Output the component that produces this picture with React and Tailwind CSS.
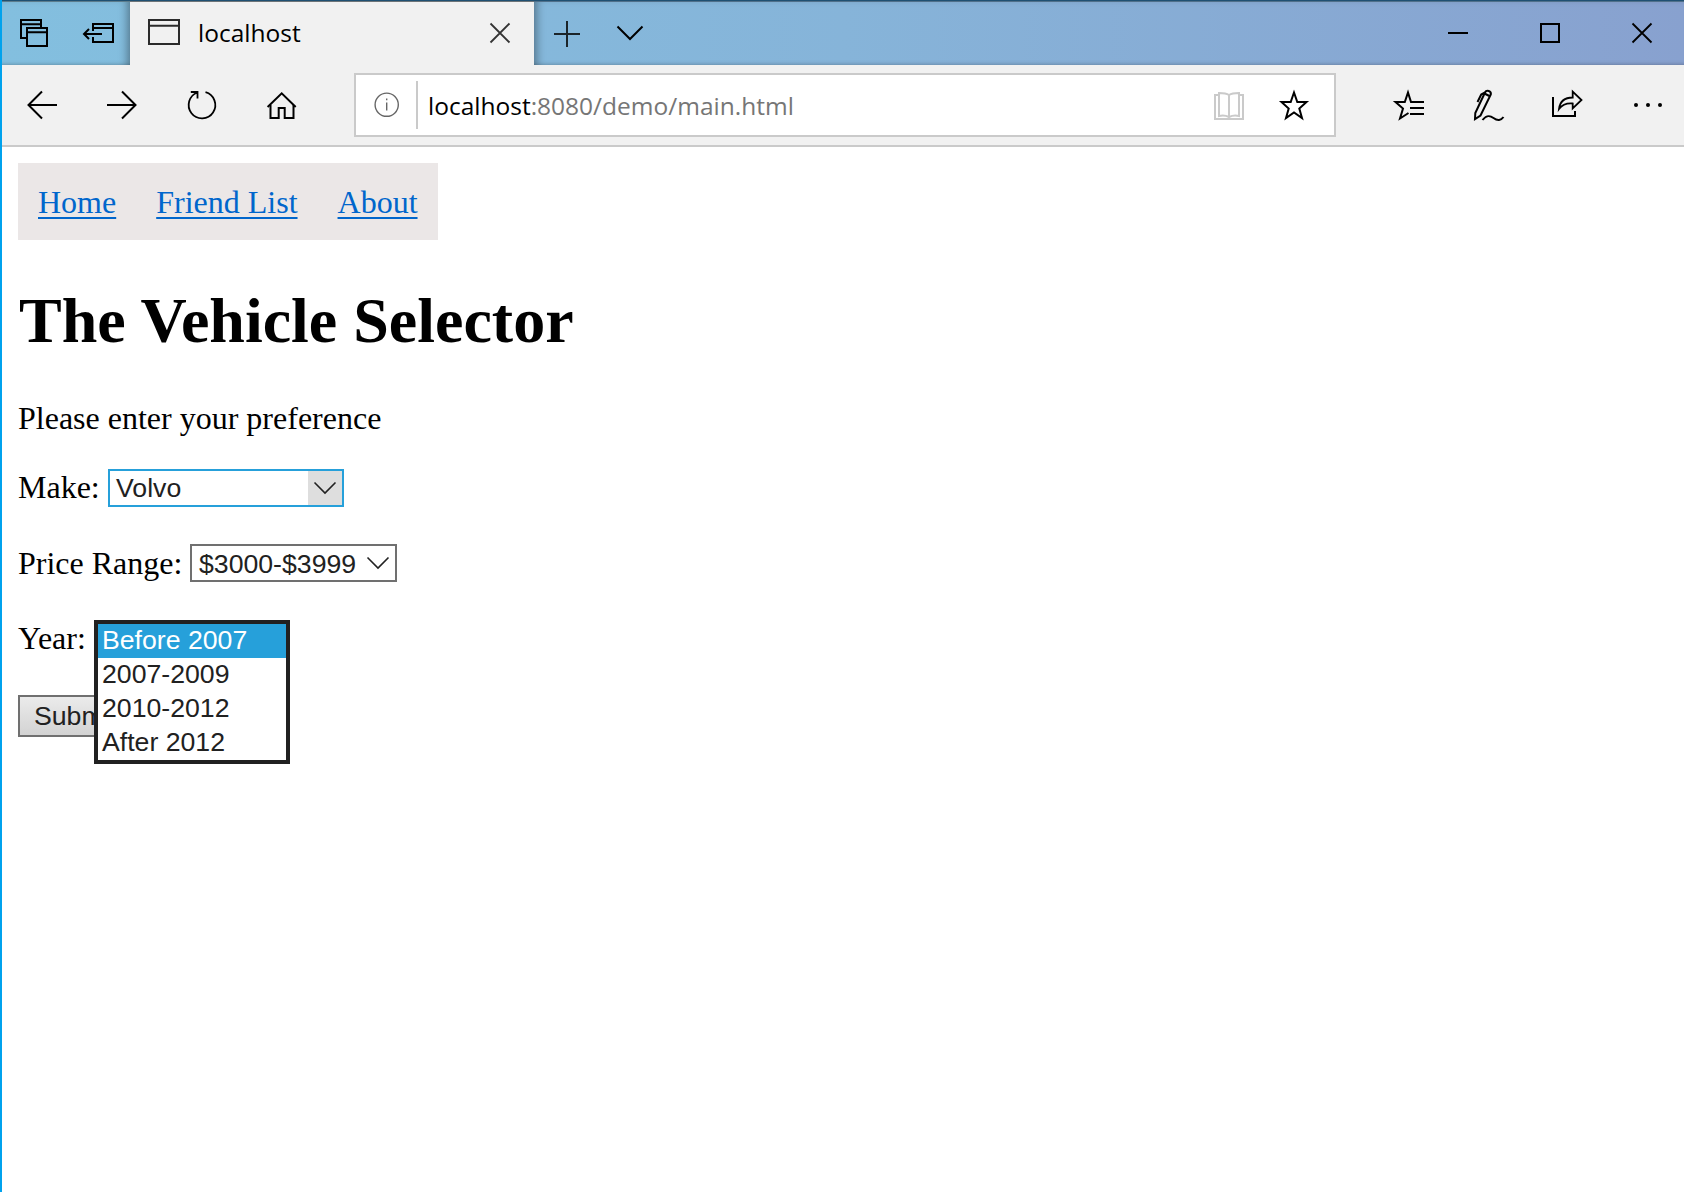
import React from "react";

/* Icons share the window's coordinate system through their viewBox. */
function Icon({ box, w = 2, color = "#000", children, className = "" }) {
  const [, , width, height] = box;
  return (
    <svg
      width={width}
      height={height}
      viewBox={box.join(" ")}
      fill="none"
      stroke={color}
      strokeWidth={w}
      className={"block shrink-0 " + className}
    >
      {children}
    </svg>
  );
}

function TitleBar() {
  return (
    <div className="flex h-[65px] border-t border-[#1f5072] bg-linear-to-r from-[#83bfdf] via-[#86b4d9] to-[#88a1cf]">
      <div className="flex w-[128px] border-t border-[#5c7c8c] pt-4 pl-[17px] shadow-[inset_-8px_0_8px_-5px_rgba(0,0,0,0.35),inset_0_-4px_4px_-4px_rgba(0,0,0,0.25)]">
        <Icon box={[19, 18, 30, 30]} className="mr-[33px]">
          <path d="M41 27V20H21V38H26M21 24.2H41" />
          <path d="M27 28H47V46H27ZM27 32.2H47" />
        </Icon>
        <Icon box={[82, 18, 34, 30]}>
          <path d="M93 31V24H113V42H93V37M93 28H113" />
          <path d="M84 34H102M89 29L84 34L89 39" />
        </Icon>
      </div>
      <div className="flex w-[404px] border-t border-[#6d7478] bg-[#f1f1f1] pt-4 pl-[17px]">
        <Icon box={[147, 18, 34, 28]} color="#2b2b2b">
          <path d="M149 20H179V44H149ZM149 25.8H179" />
        </Icon>
        <span className="ml-[17px] w-[290px] font-['Open_Sans',sans-serif] text-[24.5px] leading-[30px]">
          localhost
        </span>
        <Icon box={[488, 18, 24, 28]} color="#333" w={1.8}>
          <path d="M490.5 23.5L509.5 42.5M509.5 23.5L490.5 42.5" />
        </Icon>
      </div>
      <div className="flex flex-1 border-t border-[#50708a] pt-4 pl-[18px] shadow-[inset_8px_0_8px_-5px_rgba(0,0,0,0.35),inset_0_-4px_4px_-4px_rgba(0,0,0,0.25)]">
        <Icon box={[552, 18, 30, 30]} color="#1b2429">
          <path d="M554 34H580M567 21V47" />
        </Icon>
        <Icon box={[615, 18, 30, 30]} className="ml-[33px]">
          <path d="M617.5 26.5L630 39L642.5 26.5" />
        </Icon>
        <Icon box={[1446, 18, 24, 30]} className="ml-auto">
          <path d="M1448 33H1468" />
        </Icon>
        <Icon box={[1538, 18, 24, 30]} className="ml-[68px]">
          <path d="M1541 24H1559V42H1541Z" />
        </Icon>
        <Icon box={[1630, 18, 24, 30]} className="mr-[30px] ml-[68px]" w={1.8}>
          <path d="M1632.5 23.5L1651.5 42.5M1651.5 23.5L1632.5 42.5" />
        </Icon>
      </div>
    </div>
  );
}

function AddressBar() {
  return (
    <div className="flex h-16 w-[982px] items-center border-2 border-[#cacaca] bg-white">
      <Icon box={[374, 93, 26, 26]} color="#666" w={1.4} className="ml-[18px]">
        <circle cx="386.7" cy="105.7" r="11.6" />
        <path d="M386.7 103.5V111.5M386.7 99.5V101.3" />
      </Icon>
      <div className="ml-4 h-12 w-0.5 bg-[#cacaca]" />
      <span className="ml-2.5 flex-1 pt-0.5 font-['Open_Sans',sans-serif] text-[24.5px] leading-[30px] text-[#767676]">
        <span className="text-black">localhost</span>:8080/demo/main.html
      </span>
      <Icon box={[1212, 90, 34, 32]} color="#cacaca">
        <path d="M1218 96H1215V120H1243V96H1240" />
        <path d="M1229 96C1226 94 1223 94 1219 94V117C1223 116 1226 116.500 1229 118C1232 116.500 1235 116 1239 117V94C1235 94 1232 94 1229 96ZM1229 96V118" />
      </Icon>
      <Icon box={[1278, 88, 32, 34]} className="mr-6 ml-8">
        <path d="M1294 92.500L1297.300 102H1306.500L1299.300 108.500L1302 118L1294 112.500L1286 118L1288.700 108.500L1281.500 102H1290.700Z" />
      </Icon>
    </div>
  );
}

function Toolbar() {
  return (
    <div className="flex h-[82px] items-start border-b-2 border-[#cacaca] bg-[#f1f1f1] pt-2">
      <div className="flex w-[352px] pt-[15px] pl-6">
        <Icon box={[26, 88, 34, 34]}>
          <path d="M28.500 105H57M42 91.500L28.500 105L42 118.500" />
        </Icon>
        <Icon box={[105, 88, 34, 34]} className="ml-[45px]">
          <path d="M107 105H135.500M122 91.500L135.500 105L122 118.500" />
        </Icon>
        <Icon box={[186, 88, 34, 34]} className="ml-[47px]" w={1.8}>
          <path d="M205.500 92.200A13.300 13.300 0 1 1 197.500 92.500M190.800 92H197.500V98.500" />
        </Icon>
        <Icon box={[265, 88, 34, 34]} className="ml-[45px]">
          <path d="M267.600 107L281.700 93.300L295.700 107" />
          <path d="M270.500 105V118H278.700V108H284.700V118H293.500V105" />
        </Icon>
      </div>
      <AddressBar />
      <div className="flex flex-1 pt-[15px] pl-14">
        <Icon box={[1392, 88, 34, 34]}>
          <path d="M1424 102H1411L1408 92.500L1404.800 102H1395.500L1403 108.500L1400 118.500L1408.500 113M1410 108H1424M1410 114H1424" />
        </Icon>
        <Icon box={[1472, 88, 34, 34]} className="ml-[46px]" w={2}>
          <path d="M1475 119L1475.300 113L1485 92.500C1486.500 89.500 1491.500 91 1490.800 94.500L1480.500 115.500ZM1484.500 93.500L1490.300 96.500" />
          <path d="M1477.500 102L1481.200 94.500L1485 92.500" />
          <path d="M1482.500 120C1486.500 115 1489.500 115 1493.500 118C1497.500 121 1501 120.500 1503.500 117" />
        </Icon>
        <Icon box={[1550, 88, 34, 34]} className="ml-11">
          <path d="M1553 97V116H1575V111" />
          <path
            strokeWidth="1.8"
            d="M1559 109C1560 101 1565 97.500 1572.700 97.500V91.500L1581.500 100L1572.700 108.500V103.500C1567 103 1562 105 1559 109Z"
          />
        </Icon>
        <Icon box={[1632, 88, 32, 34]} className="ml-12">
          <g fill="#000" stroke="none">
            <circle cx="1636" cy="105" r="2" />
            <circle cx="1648" cy="105" r="2" />
            <circle cx="1660" cy="105" r="2" />
          </g>
        </Icon>
      </div>
    </div>
  );
}

function Chevron() {
  return (
    <Icon box={[0, 0, 24, 14]} color="#222" w={1.6}>
      <path d="M1.500 1.500L12 12L22.500 1.500" />
    </Icon>
  );
}

const YEARS = ["Before 2007", "2007-2009", "2010-2012", "After 2012"];

function Page() {
  return (
    <main className="px-4 pt-4 font-['Liberation_Serif',serif] text-[32px] leading-9 text-black">
      <nav className="flex h-[77px] w-[420px] gap-10 bg-[#ebe7e7] px-5 pt-[21px] whitespace-nowrap text-[#0066cc]">
        {["Home", "Friend List", "About"].map((label) => (
          <a
            key={label}
            href="#"
            className="underline decoration-2 underline-offset-[4px] [text-decoration-skip-ink:none]"
          >
            {label}
          </a>
        ))}
      </nav>
      <h1 className="mt-[45px] pl-px text-[64px] leading-[72px] font-bold">The Vehicle Selector</h1>
      <p className="mt-[43px]">Please enter your preference</p>

      <div className="mt-[33px] flex h-[38px] items-start">
        <span className="w-[90px]">Make:</span>
        <div className="flex h-[38px] w-[236px] border-2 border-[#26a0da] font-['Liberation_Sans',sans-serif] text-[26.667px] leading-[34px] text-[#212121]">
          <span className="flex-1 pl-1.5">Volvo</span>
          <span className="flex w-[34px] items-center justify-center bg-[#dedede]">
            <Chevron />
          </span>
        </div>
      </div>

      <div className="mt-[37px] flex h-[38px] items-start">
        <span className="w-[172px] pt-px">Price Range:</span>
        <div className="flex h-[38px] w-[207px] items-center border-2 border-[#707070] font-['Liberation_Sans',sans-serif] text-[26.667px] leading-[34px] text-[#212121]">
          <span className="flex-1 pt-px pl-[7px]">$3000-$3999</span>
          <span className="mr-[5px]">
            <Chevron />
          </span>
        </div>
      </div>

      <div className="relative mt-[38px] flex h-[38px] items-start">
        <span>Year:</span>
        <ul className="absolute top-0 left-[76px] z-10 w-[196px] border-4 border-[#212121] bg-white font-['Liberation_Sans',sans-serif] text-[26.667px] leading-[32px] text-[#212121]">
          {YEARS.map((year, i) => (
            <li
              key={year}
              className={i === 0 ? "h-[34px] bg-[#26a0da] pl-1 text-white" : "h-[34px] pl-1"}
            >
              {year}
            </li>
          ))}
        </ul>
      </div>

      <button className="mt-[37px] block h-[42px] w-[115px] border-2 border-[#707070] bg-linear-to-b from-[#ebebeb] to-[#d3d3d3] text-center font-['Liberation_Sans',sans-serif] text-[26.667px] leading-[38px] text-[#212121]">
        Submit
      </button>
    </main>
  );
}

export default function App() {
  return (
    <div className="h-[1192px] w-[1684px] overflow-hidden border-l-2 border-[#00a2ed] bg-white">
      <TitleBar />
      <Toolbar />
      <Page />
    </div>
  );
}
